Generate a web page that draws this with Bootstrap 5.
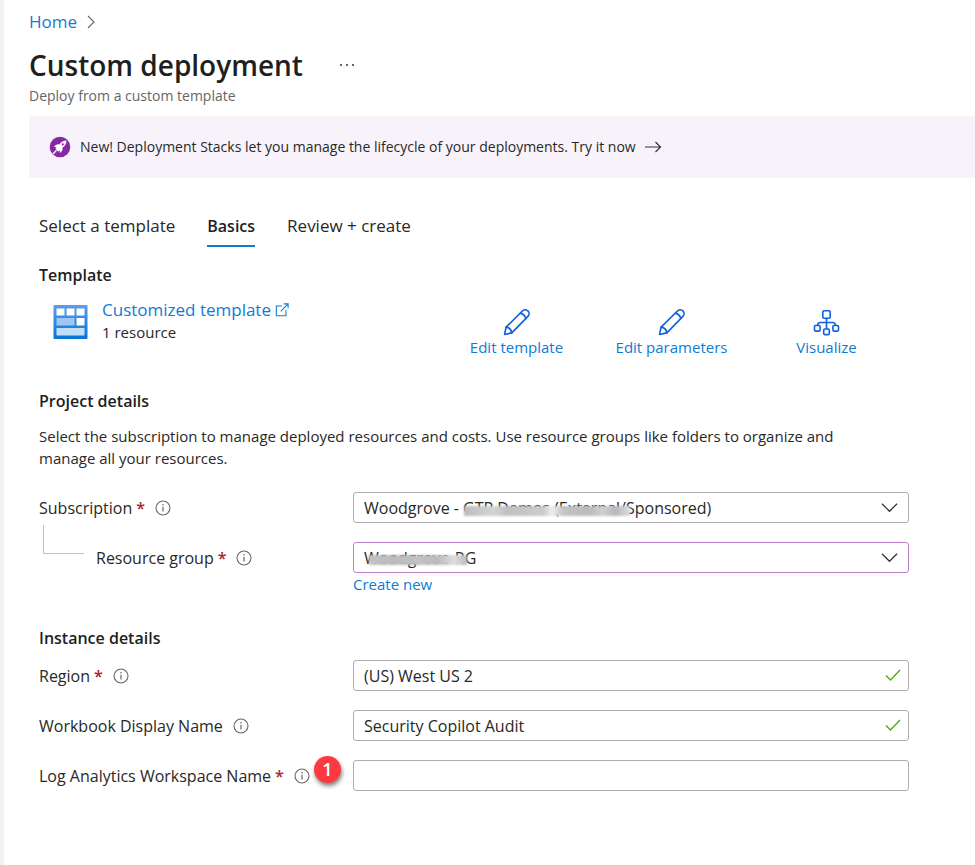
<!DOCTYPE html>
<html lang="en">
<head>
<meta charset="utf-8">
<meta name="viewport" content="width=device-width, initial-scale=1">
<title>Custom deployment</title>
<link href="https://cdn.jsdelivr.net/npm/bootstrap@5.3.0/dist/css/bootstrap.min.css" rel="stylesheet">
<style>
  body { font-family: "Open Sans", "Noto Sans", sans-serif; font-size: 15px; line-height: 22px; color: #292827; background: #fff; }
  a { color: #0f7bd3; text-decoration: none; }
  a:hover { text-decoration: underline; }
  svg { display: block; flex: none; }
  .blade { border-left: 4px solid #f3f3f3; min-height: 100vh; padding-left: 25px; padding-top: 11px; }
  .crumbs, .template-link { font-size: 17px; }
  .blade-title { font-size: 28px; line-height: 40px; font-weight: 600; color: #201f1e; margin: 12px 0 0; }
  .blade-sub { font-size: 14px; line-height: 20px; color: #666; margin: 1px 0 10px; }
  .more-btn { margin: 11px 0 0 35px; }
  .promo { background: #f8f3fb; padding: 20px; border-radius: 2px 0 0 2px; font-size: 14px; }
  .promo a { color: #292827; }
  .promo-text { margin-left: 9px; }
  .blade-body { padding: 37px 66px 0 10px; }
  .wizard-tabs { gap: 32px; }
  .wizard-tabs .nav-link { padding: 0 0 8px; color: #292827; font-size: 17px; border-bottom: 2px solid transparent; }
  .wizard-tabs .nav-link.active { font-size: 16px; font-weight: 600; color: #201f1e; border-color: #0f7bd3; }
  h2 { font-size: 16px; line-height: 22px; font-weight: 600; color: #201f1e; margin: 0; }
  .template-heading { margin-top: 17px; }
  .template-row { margin: 13px 0 32px; }
  .template-tile { padding: 5px 14px 0; }
  .intro { max-width: 840px; margin: 13px 0 23px; }
  .instance-heading { margin: 32px 0 11px; }
  .actions { display: grid; grid-template-columns: repeat(3, 155px); margin: 10px 5px 0 0; }
  .field { display: flex; align-items: flex-start; margin-bottom: 19px; }
  .field-name { width: 314px; flex: none; min-height: 31px; display: flex; align-items: center; position: relative; font-size: 16px; white-space: nowrap; }
  .req { color: #a4262c; margin-left: 4px; font-weight: 600; }
  .info-btn { margin-left: 10px; }
  .plain-btn { border: 0; background: none; padding: 0; color: #555; }
  .field .form-select, .field .form-control { height: 31px; padding: 0 34px 0 10px; border: 1px solid #b0aeac; border-radius: 3px; font-size: 16px; line-height: 22px; color: #292827; background-image: none; }
  .field .form-select.picked { border-color: #b97fcb; }
  .end-icon { position: absolute; right: 8px; top: 7px; pointer-events: none; }
  .drop-icon { right: 11px; }
  .child-field .field-name { padding-left: 57px; }
  .tree-line { position: absolute; left: 4px; top: -17px; width: 41px; height: 29px; border: solid #c2c0be; border-width: 0 0 1px 1px; }
  .redact { position: absolute; height: 10px; filter: blur(1px); pointer-events: none; }
  .redact-a { left: 111px; top: 14px; width: 166px; background: linear-gradient(90deg, #bbb, #d5d5d5 18%, #c0c0c0 26%, #ccc 48%, #eee 53%, #c4c4c4 60%, #bbb 75%, #d0d0d0 84%, #b8b8b8 91%, #ddd); }
  .redact-b { left: 16px; top: 13px; width: 98px; background: linear-gradient(90deg, #c4c4c4, #bbb 25%, #c2c2c2 50%, #bbb 70%, #ddd 87%, #bbb); }
  .step { position: absolute; right: 12px; top: -4px; width: 27px; height: 27px; border-radius: 50%; background: #fb3b40; color: #fff; font-size: 18px; font-weight: 600; line-height: 26px; text-align: center; box-shadow: 1px 3px 4px rgba(0,0,0,.5); }
</style>
</head>
<body>
<svg class="d-none" aria-hidden="true">
  <symbol id="info" viewBox="0 0 16 16"><circle cx="8" cy="8" r="7" fill="none" stroke="#666" stroke-width="1.1"/><path d="M8 6.8v4.7" stroke="#666" stroke-width="1.2"/><circle cx="8" cy="4.8" r=".8" fill="#666"/></symbol>
  <symbol id="pencil" viewBox="0 0 26 26"><g fill="none" stroke="#1260dc" stroke-width="1.6" stroke-linejoin="round" stroke-linecap="round"><path d="M1.500 24.500l1.500-7L18.700 1.900a3.500 3.500 0 0 1 5.300 5.200L8.500 23z"/><path d="M3 17.500Q7.800 18 8.500 23M16.700 4q4 1 5.300 5.200"/></g></symbol>
  <symbol id="down" viewBox="0 0 18 16"><path d="M1 4l8 8 8-8" fill="none" stroke="#333" stroke-width="1.3"/></symbol>
  <symbol id="tick" viewBox="0 0 16 16"><path d="M1 8.500l4.500 4.500L15 3" fill="none" stroke="#57a61a" stroke-width="1.4"/></symbol>
</svg>

<main class="blade">
  <nav class="crumbs d-flex align-items-center" aria-label="Breadcrumb">
    <a class="me-2" href="#">Home</a>
    <svg width="12" height="16" viewBox="0 0 12 16"><path d="M3 2l6 6-6 6" fill="none" stroke="#666" stroke-width="1.1"/></svg>
  </nav>
  <div class="d-flex align-items-center">
    <h1 class="blade-title">Custom deployment</h1>
    <button type="button" class="plain-btn more-btn" aria-label="More"><svg width="18" height="6" viewBox="0 0 18 6" fill="#333"><circle cx="3" cy="3" r="1"/><circle cx="9" cy="3" r="1"/><circle cx="15" cy="3" r="1"/></svg></button>
  </div>
  <p class="blade-sub">Deploy from a custom template</p>

  <div class="promo d-flex align-items-center">
    <svg width="22" height="22" viewBox="0 0 22 22"><circle cx="11" cy="11" r="10.300" fill="#8729a5"/><path d="M17.500 4.500c-3 0-5.300 1.300-7.300 4-2-.5-3.800.5-5.200 2.500l2.500.3-1 1.500 2.700 2.700 1.500-1 .3 2.500c2-1.400 3-3.200 2.500-5.200 2.700-2 4-4.300 4-7.300z" fill="#fff"/><path d="M4 18l3.500-3.700" stroke="#fff" stroke-width="1.300"/><circle cx="13.700" cy="8.400" r="1.100" fill="#8729a5"/></svg>
    <span class="promo-text">New! Deployment Stacks let you manage the lifecycle of your deployments. <a href="#">Try it now</a></span>
    <svg class="ms-2" width="18" height="16" viewBox="0 0 18 16"><path d="M1 8h15.500M11.500 3l5 5-5 5" fill="none" stroke="#333" stroke-width="1.200"/></svg>
  </div>

  <div class="blade-body">
    <ul class="nav wizard-tabs">
      <li class="nav-item"><a class="nav-link" href="#">Select a template</a></li>
      <li class="nav-item"><a class="nav-link active" aria-current="page" href="#">Basics</a></li>
      <li class="nav-item"><a class="nav-link" href="#">Review + create</a></li>
    </ul>

    <h2 class="template-heading">Template</h2>
    <div class="template-row d-flex justify-content-between">
      <div class="d-flex">
        <div class="template-tile">
          <svg width="35" height="36" viewBox="0 0 35 36"><defs><linearGradient id="tileBlue" x1="0" y1="0" x2="0" y2="1"><stop offset="0" stop-color="#5a9df0"/><stop offset="1" stop-color="#0674d4"/></linearGradient></defs><rect x=".5" y="1" width="34" height="34" rx="1" fill="url(#tileBlue)"/><path fill="#fff" d="M3.500 4.500h8v7h-8zM13.500 4.500h8v7h-8zM23.500 4.500h8v7h-8zM23.500 14h8v7.500h-8z"/><path fill="#9fc6f4" d="M3.500 14h18v7.500h-18z"/><path fill="#c2dff8" d="M3.500 24h28v7.500h-28z"/></svg>
        </div>
        <div>
          <a class="template-link d-flex align-items-center" href="#">Customized template
            <svg class="ms-1" width="14" height="14" viewBox="0 0 16 16" fill="none" stroke="#0f7bd3" stroke-width="1.200"><path d="M8 3.500H1.500v11h11V8M6.500 9.500L15 1M10 1h5v5"/></svg></a>
          <div>1 resource</div>
        </div>
      </div>
      <div class="actions text-center">
        <a class="d-flex flex-column align-items-center" href="#"><svg width="27" height="27"><use href="#pencil"/></svg>Edit template</a>
        <a class="d-flex flex-column align-items-center" href="#"><svg width="27" height="27"><use href="#pencil"/></svg>Edit parameters</a>
        <a class="d-flex flex-column align-items-center" href="#"><svg width="27" height="27" viewBox="0 0 27 27" fill="none" stroke="#1260dc" stroke-width="1.600"><rect x="9.800" y="1.800" width="7.400" height="7.400" rx="1.200"/><rect x="1.500" y="16.500" width="5.600" height="5.600" rx="1"/><rect x="10.700" y="20" width="5.600" height="5.600" rx="1"/><rect x="19.900" y="16.500" width="5.600" height="5.600" rx="1"/><path d="M13.500 9.200V20M4.500 16.500c0-2 1-3 3-3h12c2 0 3 1 3 3"/></svg>Visualize</a>
      </div>
    </div>

    <h2>Project details</h2>
    <p class="intro">Select the subscription to manage deployed resources and costs. Use resource groups like folders to organize and manage all your resources.</p>

    <div class="field">
      <div class="field-name"><label for="sub">Subscription<span class="req">*</span></label><button type="button" class="plain-btn info-btn" aria-label="About subscription"><svg width="16" height="16"><use href="#info"/></svg></button></div>
      <div class="flex-grow-1 position-relative">
        <select class="form-select" id="sub"><option>Woodgrove - GTP Demos (External/Sponsored)</option></select>
        <span class="redact redact-a"></span>
        <svg class="end-icon drop-icon" width="17" height="17"><use href="#down"/></svg>
      </div>
    </div>
    <div class="field child-field">
      <div class="field-name"><span class="tree-line"></span><label for="rg">Resource group<span class="req">*</span></label><button type="button" class="plain-btn info-btn" aria-label="About resource group"><svg width="16" height="16"><use href="#info"/></svg></button></div>
      <div class="flex-grow-1 position-relative">
        <select class="form-select picked" id="rg"><option>Woodgrove-RG</option></select>
        <span class="redact redact-b"></span>
        <svg class="end-icon drop-icon" width="17" height="17"><use href="#down"/></svg>
        <a href="#">Create new</a>
      </div>
    </div>

    <h2 class="instance-heading">Instance details</h2>
    <div class="field">
      <div class="field-name"><label for="region">Region<span class="req">*</span></label><button type="button" class="plain-btn info-btn" aria-label="About region"><svg width="16" height="16"><use href="#info"/></svg></button></div>
      <div class="flex-grow-1 position-relative">
        <input class="form-control" id="region" value="(US) West US 2">
        <svg class="end-icon" width="16" height="16"><use href="#tick"/></svg>
      </div>
    </div>
    <div class="field">
      <div class="field-name"><label for="wb">Workbook Display Name</label><button type="button" class="plain-btn info-btn" aria-label="About workbook display name"><svg width="16" height="16"><use href="#info"/></svg></button></div>
      <div class="flex-grow-1 position-relative">
        <input class="form-control" id="wb" value="Security Copilot Audit">
        <svg class="end-icon" width="16" height="16"><use href="#tick"/></svg>
      </div>
    </div>
    <div class="field">
      <div class="field-name"><label for="law">Log Analytics Workspace Name<span class="req">*</span></label><button type="button" class="plain-btn info-btn" aria-label="About workspace name"><svg width="16" height="16"><use href="#info"/></svg></button><span class="step">1</span></div>
      <div class="flex-grow-1"><input class="form-control" id="law"></div>
    </div>
  </div>
</main>
<script src="https://cdn.jsdelivr.net/npm/bootstrap@5.3.0/dist/js/bootstrap.bundle.min.js"></script>
</body>
</html>
